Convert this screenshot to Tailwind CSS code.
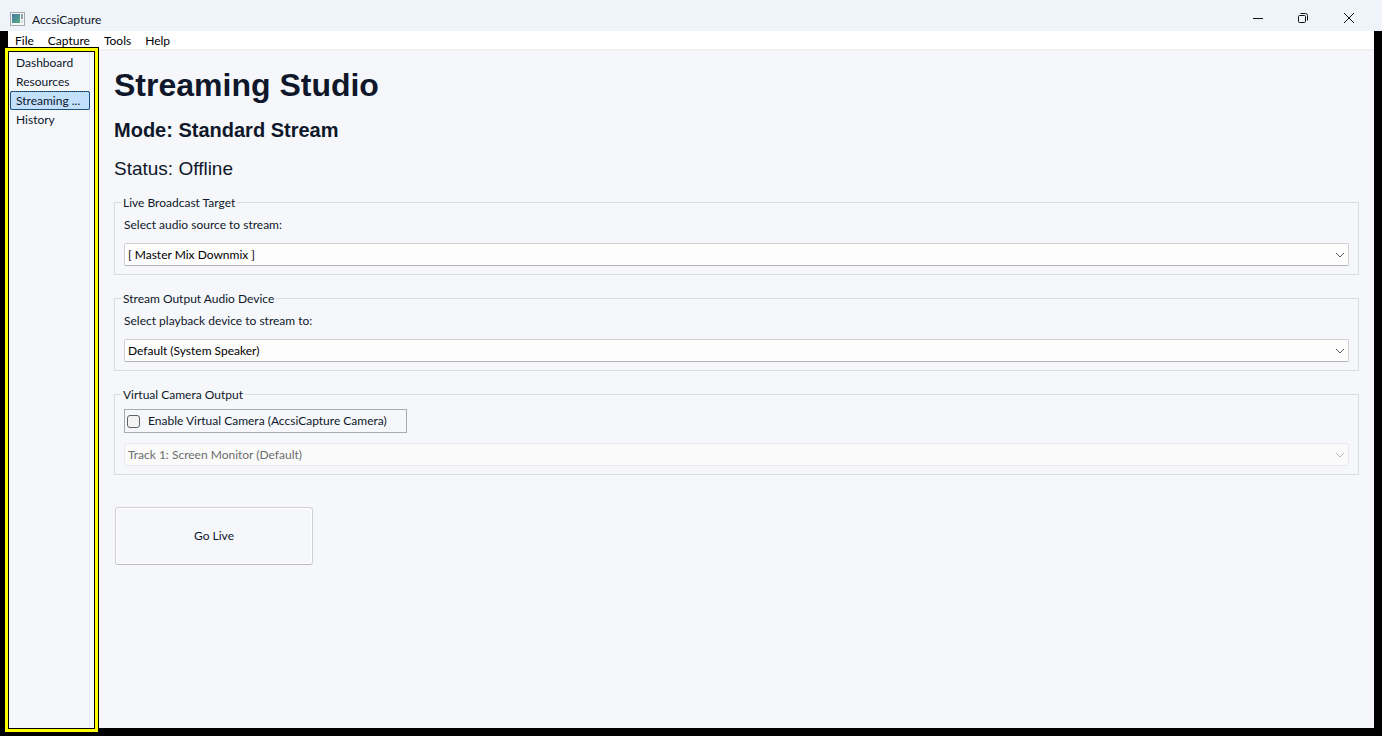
<!DOCTYPE html>
<html lang="en">
<head>
<meta charset="utf-8">
<title>AccsiCapture</title>
<script src="https://cdn.jsdelivr.net/npm/@tailwindcss/browser@4"></script>
</head>
<body class="flex h-screen flex-col overflow-hidden bg-black font-['Lato',sans-serif] text-[12px] leading-4 text-[#0f172a]">
  <header class="flex h-[31px] shrink-0 items-center bg-[#eff3fa] pl-[10px]">
    <svg class="mt-[6px] h-[14px] w-[15px]" viewBox="0 0 15 14" aria-hidden="true">
      <defs><linearGradient id="g" x1="0" y1="0" x2="1" y2="1"><stop offset="0" stop-color="#4a78a8"/><stop offset="1" stop-color="#4fae7c"/></linearGradient></defs>
      <rect x=".5" y=".5" width="14" height="13" fill="#f4f6f8" stroke="#a4a9b0"/>
      <rect x="2" y="2" width="8" height="9" fill="url(#g)"/>
      <rect x="11" y="2" width="2" height="5" fill="#8f9fa8"/>
      <rect x="11" y="8" width="2" height="3" fill="#d5dade"/>
    </svg>
    <span class="mt-2 ml-[7px] grow">AccsiCapture</span>
    <button aria-label="Minimize" class="mt-[5px] flex h-[26px] w-[46px] items-center justify-center"><svg width="12" height="12" viewBox="0 0 12 12"><path d="M2 6.500H12" stroke="#111" fill="none"/></svg></button>
    <button aria-label="Restore" class="mt-[5px] flex h-[26px] w-[46px] items-center justify-center"><svg width="12" height="12" viewBox="0 0 12 12" fill="none" stroke="#111"><rect x="1.500" y="3.500" width="7" height="7" rx="1"/><path d="M3.500 1.500H8.500Q10.500 1.500 10.500 3.500V8.500"/></svg></button>
    <button aria-label="Close" class="mt-[5px] mr-[10px] flex h-[26px] w-[46px] items-center justify-center"><svg width="12" height="12" viewBox="0 0 12 12"><path d="M1 1L11 11M11 1L1 11" stroke="#111" fill="none"/></svg></button>
  </header>
  <div class="mx-2 mb-2 flex min-h-0 grow flex-col">
    <nav aria-label="Menu" class="flex h-5 shrink-0 items-end gap-[14px] border-b-2 border-[#f0f0f0] bg-white pl-[7px] text-black">
      <button>File</button><button>Capture</button><button>Tools</button><button>Help</button>
    </nav>
    <div class="flex min-h-0 grow">
      <aside class="relative w-[91px] shrink-0 bg-[#f5f7fb]">
        <ul class="mr-[9px] flex h-full flex-col border-r border-[#e2e8f0] pt-[2px] pl-[2px]">
          <li><a href="#" class="block h-[19px] pt-[2px] pl-[6px]">Dashboard</a></li>
          <li><a href="#" class="block h-[19px] pt-[2px] pl-[6px]">Resources</a></li>
          <li><a href="#" aria-current="page" class="-mr-px block h-[19px] rounded-[2px] border border-[#0078d7] bg-[#c2e0fb] pt-px pl-[5px] whitespace-nowrap outline-1 -outline-offset-1 outline-dotted outline-[#3d2a1c]">Streaming ...</a></li>
          <li><a href="#" class="block h-[19px] pt-[2px] pl-[6px]">History</a></li>
        </ul>
        <div class="pointer-events-none absolute -top-[3px] right-px -bottom-1 -left-[3px] border-3 border-[#ffff00] shadow-[0_0_0_1px_#000,inset_0_0_0_1px_#000]"></div>
      </aside>
      <main class="min-w-0 grow bg-[#f5f7fb] pr-[15px] pl-[15px]">
        <h1 class="pt-4 font-['Liberation_Sans',sans-serif] text-[32px] leading-9 font-bold">Streaming Studio</h1>
        <h2 class="mt-[15px] font-['Liberation_Sans',sans-serif] text-[20px] leading-6 font-bold">Mode: Standard Stream</h2>
        <p class="mt-[15px] font-['Liberation_Sans',sans-serif] text-[19px] leading-6">Status: Offline</p>
        <fieldset class="mt-[14px] border border-[#dcdcdc] px-[9px] pb-2">
          <legend class="-ml-[3px] px-[2px] leading-[15px]">Live Broadcast Target</legend>
          <label for="src" class="mt-[7px] block">Select audio source to stream:</label>
          <div class="relative mt-[10px]">
            <select id="src" class="block h-[23px] w-full appearance-none rounded-[2px] border border-[#d0d0d0] border-b-[#b4b4b4] bg-[#fdfdfd] pl-[3px] text-black"><option>[ Master Mix Downmix ]</option></select>
            <svg class="pointer-events-none absolute top-2 right-1 h-2 w-[10px]" viewBox="0 0 10 8"><path d="M1 2L5 6L9 2" fill="none" stroke="#5a5a5a"/></svg>
          </div>
        </fieldset>
        <fieldset class="mt-4 border border-[#dcdcdc] px-[9px] pb-2">
          <legend class="-ml-[3px] px-[2px] leading-[15px]">Stream Output Audio Device</legend>
          <label for="dev" class="mt-[7px] block">Select playback device to stream to:</label>
          <div class="relative mt-[10px]">
            <select id="dev" class="block h-[23px] w-full appearance-none rounded-[2px] border border-[#d0d0d0] border-b-[#b4b4b4] bg-[#fdfdfd] pl-[3px] text-black"><option>Default (System Speaker)</option></select>
            <svg class="pointer-events-none absolute top-2 right-1 h-2 w-[10px]" viewBox="0 0 10 8"><path d="M1 2L5 6L9 2" fill="none" stroke="#5a5a5a"/></svg>
          </div>
        </fieldset>
        <fieldset class="mt-4 border border-[#dcdcdc] px-[9px] pb-2">
          <legend class="-ml-[3px] px-[2px] leading-[15px]">Virtual Camera Output</legend>
          <label class="mt-[7px] flex h-6 w-[283px] items-center gap-2 border border-[#a9abb0] pl-[2px] whitespace-nowrap"><input type="checkbox" class="size-[13px] shrink-0 appearance-none rounded-[3px] border border-[#626262] bg-[#f3f3f3]">Enable Virtual Camera (AccsiCapture Camera)</label>
          <div class="relative mt-[10px]">
            <select disabled aria-label="Virtual camera source" class="block h-[23px] w-full appearance-none rounded-[2px] border border-[#e9e9eb] bg-[#fafafa] pl-[3px] text-[#6d6d6d] opacity-100"><option>Track 1: Screen Monitor (Default)</option></select>
            <svg class="pointer-events-none absolute top-2 right-1 h-2 w-[10px]" viewBox="0 0 10 8"><path d="M1 2L5 6L9 2" fill="none" stroke="#b8b8b8"/></svg>
          </div>
        </fieldset>
        <button class="mt-8 ml-px block h-[58px] w-[198px] rounded-[3px] border border-[#d0d0d0] border-b-[#bcbcbc] shadow-[inset_0_0_0_1px_#fff]">Go Live</button>
      </main>
    </div>
  </div>
</body>
</html>
